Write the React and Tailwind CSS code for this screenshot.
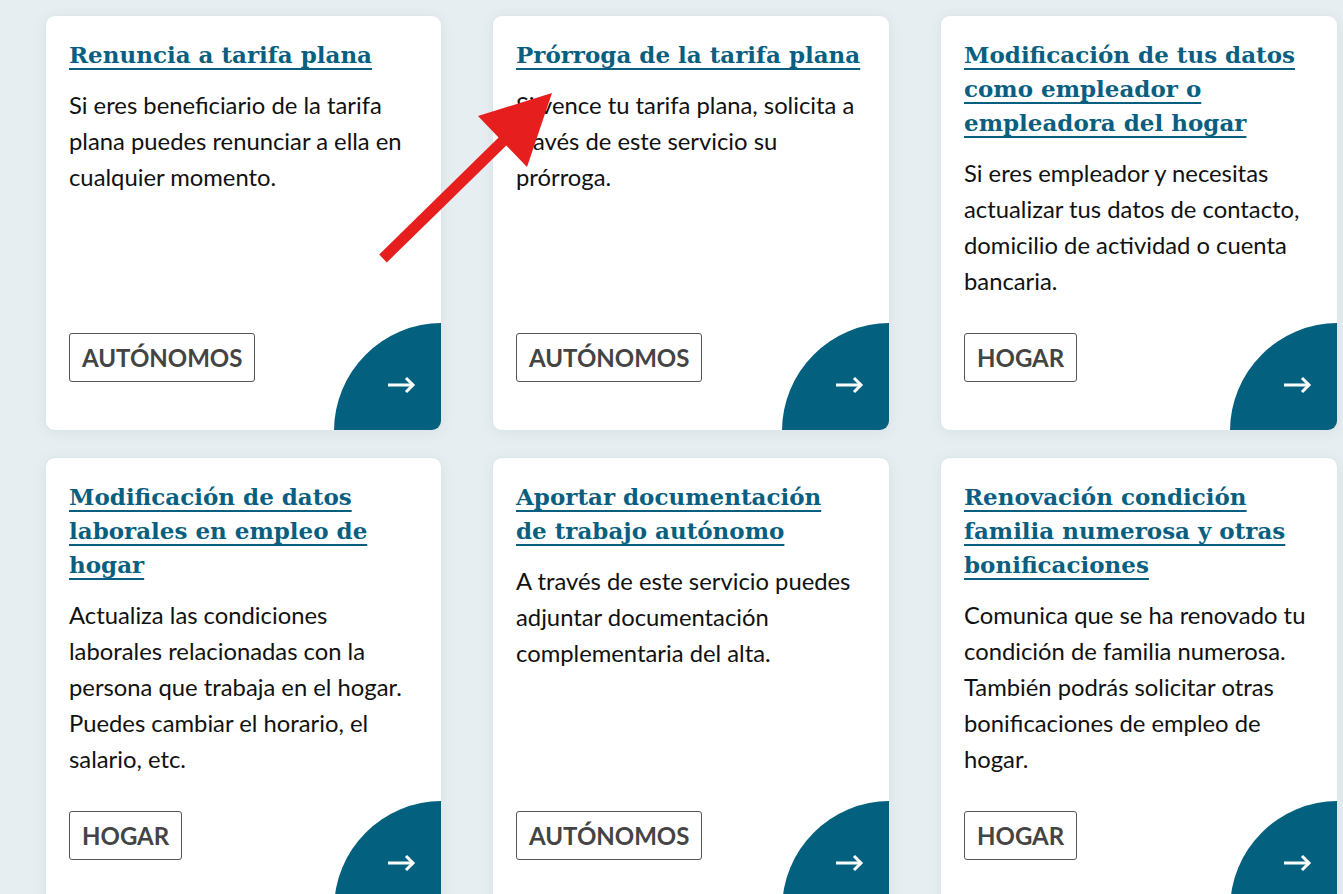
const cards = [
  {
    title: 'Renuncia a tarifa plana',
    text: 'Si eres beneficiario de la tarifa plana puedes renunciar a ella en cualquier momento.',
    tag: 'AUTÓNOMOS',
  },
  {
    title: 'Prórroga de la tarifa plana',
    text: 'Si vence tu tarifa plana, solicita a través de este servicio su prórroga.',
    tag: 'AUTÓNOMOS',
  },
  {
    title: 'Modificación de tus datos como empleador o empleadora del hogar',
    text: 'Si eres empleador y necesitas actualizar tus datos de contacto, domicilio de actividad o cuenta bancaria.',
    tag: 'HOGAR',
  },
  {
    title: 'Modificación de datos laborales en empleo de hogar',
    text: 'Actualiza las condiciones laborales relacionadas con la persona que trabaja en el hogar. Puedes cambiar el horario, el salario, etc.',
    tag: 'HOGAR',
  },
  {
    title: 'Aportar documentación de\u00a0trabajo autónomo',
    text: 'A través de este servicio puedes adjuntar documentación complementaria del alta.',
    tag: 'AUTÓNOMOS',
  },
  {
    title: 'Renovación condición familia numerosa y otras bonificaciones',
    text: 'Comunica que se ha renovado tu condición de familia numerosa. También podrás solicitar otras bonificaciones de empleo de hogar.',
    tag: 'HOGAR',
  },
];

const ServiceCard = ({ title, text, tag }) => (
  <article className="relative flex flex-col overflow-hidden rounded-[10px] border border-[#dbe7ec] bg-white px-[23px] pt-[22px] pb-[48px] shadow-[0_2px_14px_rgba(0,70,100,0.07)]">
    <a
      href="#"
      className="text-[23px] font-bold leading-[34px] text-[#0a5f80] underline decoration-[2px] underline-offset-[5px]"
      style={{ fontFamily: '"DejaVu Serif", serif' }}
    >
      {title}
    </a>
    <p className="mt-[15px] text-[23.8px] leading-[36px] text-[#111]">{text}</p>
    <div className="mt-auto pt-[34px]">
      <span className="inline-flex h-[49px] items-center rounded-[3px] border border-[#555] px-[12px] text-[24px] font-bold text-[#444]">
        {tag}
      </span>
    </div>
    <div className="absolute -right-px -bottom-px flex h-[108px] w-[108px] items-start justify-start rounded-tl-full bg-[#04607f]">
      <svg
        className="mt-[53px] ml-[54px]"
        width="28"
        height="18"
        viewBox="0 0 28 18"
        fill="none"
        stroke="white"
        strokeWidth="3"
      >
        <path d="M0 9h25" />
        <path d="M18 2l7 7-7 7" />
      </svg>
    </div>
  </article>
);

export default function App() {
  return (
    <div
      className="relative min-h-[894px] overflow-hidden bg-[#e7eef1] pt-[15px] pl-[45px]"
      style={{ fontFamily: 'Lato, "Noto Sans", sans-serif' }}
    >
      <div className="grid grid-cols-[397px_398px_398px] gap-x-[50px] gap-y-[26px]">
        {cards.map((c) => (
          <ServiceCard key={c.title} {...c} />
        ))}
      </div>

      <svg className="pointer-events-none absolute top-0 left-0" width="1343" height="894">
        <polygon
          fill="#e61e1e"
          points="379.2,254.6 498.6,137.6 478,116 552,93 527,167 506.3,145.4 386.8,262.4"
        />
      </svg>
    </div>
  );
}
